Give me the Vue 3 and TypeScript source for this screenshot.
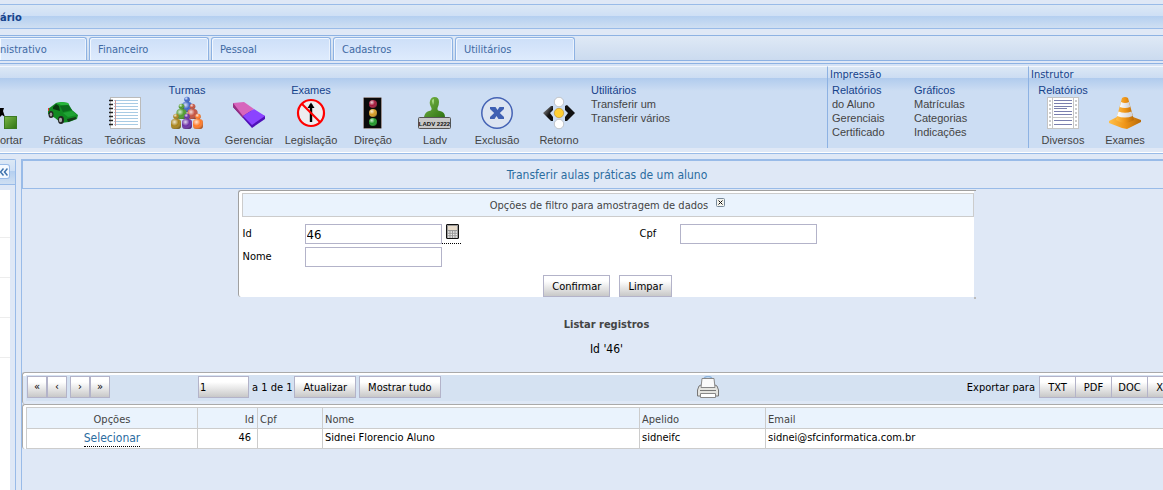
<script setup lang="ts">
import { ref } from 'vue'

interface Tool {
  icon: string
  label: string
  title?: string
}

const tabs = ['nistrativo', 'Financeiro', 'Pessoal', 'Cadastros', 'Utilitários']

const tools: Tool[] = [
  { icon: 'export', label: 'ortar' },
  { icon: 'car', label: 'Práticas' },
  { icon: 'notebook', label: 'Teóricas' },
  { icon: 'people', label: 'Nova', title: 'Turmas' },
  { icon: 'eraser', label: 'Gerenciar' },
  { icon: 'noentry', label: 'Legislação', title: 'Exames' },
  { icon: 'traffic', label: 'Direção' },
  { icon: 'stamp', label: 'Ladv' },
  { icon: 'exclude', label: 'Exclusão' },
  { icon: 'return', label: 'Retorno' },
]

const instructorTools: Tool[] = [
  { icon: 'film', label: 'Diversos', title: 'Relatórios' },
  { icon: 'cone', label: 'Exames' },
]

const printLists = [
  { title: 'Relatórios', items: ['do Aluno', 'Gerenciais', 'Certificado'] },
  { title: 'Gráficos', items: ['Matrículas', 'Categorias', 'Indicações'] },
]

const people = [
  { x: 16, y: 9, c: '#3f66c8' },
  { x: 10.5, y: 16, c: '#4f9a2e' },
  { x: 21.5, y: 16, c: '#c4513f' },
  { x: 5, y: 26, c: '#a8841c' },
  { x: 16, y: 26, c: '#6a2fa5' },
  { x: 27, y: 26, c: '#ff7a28' },
]

const id = ref('46')
const nome = ref('')
const cpf = ref('')
const page = ref('1')
const formats = ['TXT', 'PDF', 'DOC', 'XLS']
const rows = [
  { id: 46, cpf: '', nome: 'Sidnei Florencio Aluno', apelido: 'sidneifc', email: 'sidnei@sfcinformatica.com.br' },
]
</script>

<template>
  <div class="app">
    <svg class="defs" width="0" height="0" aria-hidden="true">
      <defs>
        <radialGradient id="ball" cx="0.35" cy="0.3" r="0.8">
          <stop offset="0" stop-color="#fff" stop-opacity="0.8" />
          <stop offset="0.5" stop-color="#fff" stop-opacity="0" />
          <stop offset="1" stop-color="#000" stop-opacity="0.4" />
        </radialGradient>
        <linearGradient id="green" x1="0" y1="0" x2="1" y2="1">
          <stop offset="0" stop-color="#7ab648" />
          <stop offset="1" stop-color="#2f7413" />
        </linearGradient>
        <linearGradient id="dark" x1="0" y1="0" x2="1" y2="1">
          <stop offset="0" stop-color="#aaa" />
          <stop offset="0.6" stop-color="#111" />
        </linearGradient>
        <linearGradient id="orange" x1="0" y1="0" x2="1" y2="0">
          <stop offset="0" stop-color="#ffc04a" />
          <stop offset="0.5" stop-color="#ef9517" />
          <stop offset="1" stop-color="#b86a08" />
        </linearGradient>
        <linearGradient id="band" x1="0" y1="0" x2="1" y2="0">
          <stop offset="0" stop-color="#fff" />
          <stop offset="1" stop-color="#cfcfd4" />
        </linearGradient>
      </defs>
    </svg>

    <header class="caption">ário</header>

    <nav class="tabs">
      <button v-for="t in tabs" :key="t" class="tab">{{ t }}</button>
    </nav>

    <div class="ribbon">
      <template v-for="(group, g) in [tools, null, instructorTools]" :key="g">
        <section class="group" :class="'group-' + g">
          <h2 class="group-head">{{ ['', 'Impressão', 'Instrutor'][g] }}</h2>
          <div class="group-body">
            <template v-if="group">
              <a v-for="t in group" :key="t.label" href="#" class="tool" :class="'tool-' + t.icon">
                <span class="tool-title">{{ t.title }}</span>
                <svg class="icon" viewBox="0 0 32 32" aria-hidden="true">
                  <g v-if="t.icon === 'export'">
                    <path d="M0 11 L4 11 L3 14 L5 20 L2 18 L0 20z" fill="#000" />
                    <rect x="4.5" y="19.5" width="12" height="12" fill="url(#green)" stroke="#3c7a22" />
                  </g>
                  <g v-else-if="t.icon === 'car'">
                    <path d="M1 12 L5 9 L9 6 L15 5 L21 6 L25 13 L31 18 L30 22 L22 25 L14 26 L8 21 L1 17z" fill="#118a22" />
                    <path d="M9 6 L15 5 L21 6 L22 8 L14 8z" fill="#27b53a" />
                    <path d="M13 9 L21 8 L25 13 L16 15z" fill="#0b6a1c" />
                    <path d="M6 10 L9 7 L12 9 L13 14 L6 12z" fill="#07380f" />
                    <path d="M16 16 L25 14 L30 18 L21 20z" fill="#1fa333" />
                    <ellipse cx="4" cy="17.5" rx="2.5" ry="3.500" fill="#222" />
                    <ellipse cx="4" cy="17.5" rx="1.300" ry="2" fill="#999" />
                    <ellipse cx="14" cy="23" rx="3" ry="4" fill="#222" />
                    <ellipse cx="13.5" cy="23" rx="1.600" ry="2.300" fill="#aaa" />
                    <path d="M20 22 L29 20 L29 22 L21 25z" fill="#143a18" />
                    <path d="M1 11 L2 11 L2 14 L1 14z" fill="#e33" />
                  </g>
                  <g v-else-if="t.icon === 'notebook'">
                    <rect x="1.5" y="0.5" width="30" height="31" fill="#fff" stroke="#bbb" />
                    <path d="M5 3.500H29M5 6.500H29M5 9.500H29M5 12.500H29M5 15.500H29M5 18.500H29M5 21.500H29M5 24.500H29M5 27.500H29" stroke="#a8cbe4" />
                    <path d="M6.500 3V29" stroke="#c99" />
                    <path d="M0 3.500H4M0 7.500H4M0 11.500H4M0 15.500H4M0 19.500H4M0 23.500H4M0 27.500H4" stroke="#222" stroke-width="1.300" />
                  </g>
                  <g v-else-if="t.icon === 'people'">
                    <template v-for="(p, i) in people" :key="i">
                      <rect :x="p.x - 5" :y="p.y - 4" width="10" height="10" rx="3.500" :fill="p.c" />
                      <rect :x="p.x - 5" :y="p.y - 4" width="10" height="10" rx="3.500" fill="url(#ball)" />
                      <circle :cx="p.x" :cy="p.y - 6.5" r="2.800" :fill="p.c" />
                      <circle :cx="p.x" :cy="p.y - 6.5" r="2.800" fill="url(#ball)" />
                    </template>
                  </g>
                  <g v-else-if="t.icon === 'eraser'">
                    <path d="M0 6 L0 10 L10 21 L19 31 L32 22 L32 19z" fill="#5011b8" />
                    <path d="M0 6 L0 10 L10 21 L11 15z" fill="#97307f" />
                    <path d="M0 6 L11 5 L21 12 L10 19z" fill="#d765bd" />
                    <path d="M21 12 L32 19 L19 28 L10 19z" fill="#8b43ff" />
                  </g>
                  <g v-else-if="t.icon === 'noentry'">
                    <circle cx="16" cy="16" r="13" fill="#ededf0" stroke="#f00" stroke-width="2.200" />
                    <path d="M16 25V7" stroke="#000" stroke-width="2.400" />
                    <path d="M12.500 11 L16 5.500 L19.500 11z" fill="#000" />
                    <path d="M7 7 L25 25" stroke="#f00" stroke-width="2.200" />
                  </g>
                  <g v-else-if="t.icon === 'traffic'">
                    <rect x="6.5" y="0.5" width="18" height="31" rx="1" fill="#0b0b0b" stroke="#998f8f" />
                    <circle cx="16" cy="7" r="4" fill="#a3163a" /><circle cx="16" cy="16" r="4" fill="#d59a22" /><circle cx="16" cy="25" r="4" fill="#1f9a28" />
                    <circle cx="16" cy="7" r="4" fill="url(#ball)" /><circle cx="16" cy="16" r="4" fill="url(#ball)" /><circle cx="16" cy="25" r="4" fill="url(#ball)" />
                  </g>
                  <g v-else-if="t.icon === 'stamp'">
                    <path d="M11 4 Q12 0 15.500 0 Q20 0 20 5 Q20 8 18.500 11 Q18 14 21 14 Q26 15 26 20 H5 Q6 15 10 14 Q13 14 12.500 11 Q10 7 11 4z" fill="url(#green)" />
                    <path d="M13 4 Q13 2 15 2 Q15 6 14 8z" fill="#a9dd88" />
                    <rect x="-0.5" y="20.5" width="32" height="11" rx="1" fill="#c8c8c8" stroke="#555" />
                    <text x="15.5" y="29" text-anchor="middle" class="plate">LADV 2222</text>
                  </g>
                  <g v-else-if="t.icon === 'exclude'">
                    <circle cx="16" cy="16" r="15.200" fill="#dce4f1" stroke="#4462b4" stroke-width="1.500" />
                    <path d="M9 10 H14.500 L16.500 13 L18.500 10 H23 V12 L18.800 16 L23 20 V22 H17.500 L15.500 19 L13.500 22 H9 V20 L13.200 16 L9 12z" fill="#3f60b3" />
                  </g>
                  <g v-else-if="t.icon === 'return'">
                    <path d="M0 16 L8 9 L10 9 L10 13 L7 16 L10 20 L10 24 L8 24z" fill="url(#dark)" />
                    <path d="M32 16 L24 8 L22 9 L22 13 L25 16 L22 20 L22 24 L24 24z" fill="#111" />
                    <circle cx="16" cy="5" r="4.700" fill="#fff" stroke="#aaa" stroke-width="0.600" />
                    <circle cx="16" cy="16" r="4.700" fill="#ffcf33" stroke="#b88a20" stroke-width="0.600" />
                    <circle cx="16" cy="27" r="4.700" fill="#fff" stroke="#aaa" stroke-width="0.600" />
                  </g>
                  <g v-else-if="t.icon === 'film'">
                    <rect x="0.5" y="0.5" width="31" height="31" fill="#fff" stroke="#c4c4c4" />
                    <path d="M5.500 0V32M26.500 0V32M5 20.500H27" stroke="#c4c4c4" />
                    <path d="M3 3V31M29 3V31" stroke="#ccc" stroke-width="2" stroke-dasharray="2 2" />
                    <path d="M7 3.500H25M7 6.500H25M7 9.500H25M7 11.500H20M7 14.500H25M7 17.500H25M7 23.500H25M7 27.500H25" stroke="#7a7fae" />
                  </g>
                  <g v-else-if="t.icon === 'cone'">
                    <path d="M0 24 L8 20 H24 L32 23 V25 L18 32 L13 31 L0 26z" fill="url(#orange)" />
                    <path d="M13 1 Q16 -1 19 1 L25 23 Q16 29 7 23z" fill="url(#orange)" />
                    <path d="M12 5 Q16 7 20 5 L21.300 10 Q16 12 10.800 10z" fill="url(#band)" />
                    <path d="M9.500 14.500 Q16 17 22.500 14.500 L23.800 19 Q16 22 8 19z" fill="url(#band)" />
                  </g>
                </svg>
                <span class="tool-label">{{ t.label }}</span>
              </a>
              <ul v-if="g === 0" class="links">
                <li class="links-title">Utilitários</li>
                <li><a href="#">Transferir um</a></li>
                <li><a href="#">Transferir vários</a></li>
              </ul>
            </template>
            <template v-else>
              <ul v-for="l in printLists" :key="l.title" class="links">
                <li class="links-title">{{ l.title }}</li>
                <li v-for="i in l.items" :key="i"><a href="#">{{ i }}</a></li>
              </ul>
            </template>
          </div>
        </section>
      </template>
    </div>

    <div class="work">
      <aside class="side">
        <div class="side-head">
          <button class="collapse" aria-label="Recolher">
            <svg width="8" height="8" viewBox="0 0 8 8"><path d="M3.500 0.500 L0.500 4 L3.500 7.500 M7.500 0.500 L4.500 4 L7.500 7.500" fill="none" stroke="#3f73ad" stroke-width="1.500" /></svg>
          </button>
        </div>
        <div class="side-body"><i v-for="n in 4" :key="n" class="side-row"></i></div>
      </aside>

      <main class="main">
        <h1 class="title">Transferir aulas práticas de um aluno</h1>

        <form class="filter" @submit.prevent>
          <div class="filter-head">
            Opções de filtro para amostragem de dados
            <button type="button" class="close" aria-label="Fechar">
              <svg width="9" height="9" viewBox="0 0 9 9"><rect x="0.5" y="0.5" width="8" height="8" rx="1" fill="#f4f4ee" stroke="#789" /><path d="M2.500 2.500 L6.500 6.500 M6.500 2.500 L2.500 6.500" stroke="#111" stroke-width="1" /></svg>
            </button>
          </div>
          <div class="fields">
            <label for="f-id">Id</label>
            <div class="cell">
              <input id="f-id" v-model="id" class="box" type="text" />
              <a href="#" class="calc" aria-label="Calculadora">
                <svg width="13" height="15" viewBox="0 0 13 15"><rect x="0.5" y="0.5" width="12" height="14" rx="0.500" fill="#999" stroke="#111" /><rect x="2" y="2" width="9" height="4" fill="#e8dccb" /><path d="M2 8H11M2 10.500H11M2 13H11" stroke="#eee" stroke-width="1.500" stroke-dasharray="1.500 1" /></svg>
              </a>
            </div>
            <label for="f-cpf">Cpf</label>
            <div class="cell"><input id="f-cpf" v-model="cpf" class="box" type="text" /></div>
            <label for="f-nome">Nome</label>
            <div class="cell"><input id="f-nome" v-model="nome" class="box" type="text" /></div>
          </div>
          <div class="actions">
            <button type="submit" class="btn">Confirmar</button>
            <button type="reset" class="btn">Limpar</button>
          </div>
        </form>

        <h2 class="list-title">Listar registros</h2>
        <p class="criteria">Id '46'</p>

        <div class="pager">
          <div class="bar">
            <div class="bar-part">
              <button class="btn nav">«</button><button class="btn nav">‹</button>
              <button class="btn nav nav-next">›</button><button class="btn nav">»</button>
              <input v-model="page" class="box page" type="text" aria-label="Página" />
              <span class="total">a 1 de 1</span>
              <button class="btn">Atualizar</button>
              <button class="btn all">Mostrar tudo</button>
            </div>
            <button class="print" aria-label="Imprimir">
              <svg width="22" height="22" viewBox="0 0 22 22">
                <path d="M7 2 Q11 -1 15 2" fill="none" stroke="#8fb4dc" stroke-width="1.500" />
                <path d="M2 10 L4 9 H18 L20 10 L21.500 14 V20 H0.500 V14z" fill="#e4e4e0" stroke="#777" />
                <path d="M5 2.500 H17 L18 11.500 H4z" fill="#fafafa" stroke="#888" />
                <path d="M3 14.500H19" stroke="#777" />
                <path d="M3.500 17.500H18.500V21.500H3.500z" fill="#fff" stroke="#888" />
              </svg>
            </button>
            <div class="bar-part">
              <span class="export">Exportar para</span>
              <button v-for="f in formats" :key="f" class="btn format">{{ f }}</button>
            </div>
          </div>
        </div>

        <div class="grid-wrap">
          <table class="grid">
            <colgroup><col class="c-op" /><col class="c-id" /><col class="c-cpf" /><col class="c-nome" /><col class="c-ap" /><col /></colgroup>
            <thead>
              <tr><th class="mid">Opções</th><th class="num">Id</th><th>Cpf</th><th>Nome</th><th>Apelido</th><th>Email</th></tr>
            </thead>
            <tbody>
              <tr v-for="r in rows" :key="r.id">
                <td class="mid"><a href="#" class="select">Selecionar</a></td>
                <td class="num id">{{ r.id }}</td>
                <td>{{ r.cpf }}</td>
                <td>{{ r.nome }}</td>
                <td>{{ r.apelido }}</td>
                <td>{{ r.email }}</td>
              </tr>
            </tbody>
          </table>
        </div>
      </main>
    </div>
  </div>
</template>

<style>
body {
  margin: 0;
  background: #dfe8f6;
}
</style>

<style scoped>
.app {
  display: flex;
  flex-direction: column;
  min-height: 100vh;
  overflow: hidden;
  background: #dfe8f6;
  color: #000;
  font: 11px/14px 'DejaVu Sans Condensed', 'DejaVu Sans', sans-serif;
}
.app * {
  box-sizing: border-box;
}
button,
input {
  margin: 0;
  font: inherit;
  color: inherit;
}
h1, h2, p, ul {
  margin: 0;
  padding: 0;
  font: inherit;
  list-style: none;
}
a {
  color: inherit;
  text-decoration: none;
}
svg {
  display: block;
}
.defs {
  position: absolute;
}

.caption {
  height: 25px;
  margin-top: 4px;
  border: solid #99bbe8;
  border-width: 1px 0;
  background: linear-gradient(#dce8f5, #cedff5 11px, #b4cff0 11px, #cfdff2);
  color: #15428b;
  font-weight: bold;
  line-height: 25px;
}

.tabs {
  display: flex;
  gap: 2px;
  height: 29px;
  margin-top: 6px;
  padding-top: 1px;
  border: solid #8db2e3;
  border-width: 1px 0;
  background: linear-gradient(#dfe9f6, #cbdbef 24px, #8db2e3 24px, #8db2e3 25px, #dfe8f6 25px);
}
.tab {
  width: 120px;
  height: 23px;
  padding: 1px 8px 0;
  border: 1px solid #8db2e3;
  border-bottom: 0;
  border-radius: 3px 3px 0 0;
  background: linear-gradient(#cddff8, #deebfd);
  box-shadow: inset 1px 1px #f2f7fe, inset -1px 0 #eaf2fd;
  color: #416aa3;
  text-align: left;
}
.tab:first-child {
  width: 87px;
  padding-left: 0;
  border-left: 0;
  border-top-left-radius: 0;
}

.ribbon {
  display: flex;
  height: 90px;
  padding-top: 2px;
  border-bottom: 1px solid #99bbe8;
  background: linear-gradient(#d6e3f5 2px, #dfe8f6 2px, #dfe8f6 88px, #fff 88px);
}
.group {
  height: 82px;
  border-top: 1px solid #f3f7fd;
  background: linear-gradient(#dce8f5, #cbdcf2 11px, #b0cbed 11px, #ccddf3 24px);
}
.group-0 {
  flex: 1;
}
.group-1 {
  width: 201px;
  border-left: 1px solid #8db2e3;
}
.group-2 {
  width: 135px;
  border-left: 1px solid #8db2e3;
}
.group-head {
  height: 16px;
  padding-left: 2px;
  color: #15428b;
  line-height: 16px;
}
.group-body {
  display: flex;
}
.group-1 .group-body {
  padding-left: 4px;
}
.group-2 .group-body {
  padding-left: 3px;
}
.tool {
  flex: none;
  display: flex;
  flex-direction: column;
  align-items: center;
  width: 62px;
  font-family: 'Liberation Sans', Arial, sans-serif;
}
.tool-export {
  width: 32px;
  align-items: flex-start;
}
.tool-title {
  height: 14px;
  color: #15428b;
}
.icon {
  width: 32px;
  height: 32px;
  overflow: visible;
}
.tool-label {
  margin-top: 4px;
  color: #444;
}
.plate {
  font: bold 6px 'Liberation Sans', Arial, sans-serif;
  fill: #111;
}
.links {
  width: 82px;
  color: #444;
  font-family: 'Liberation Sans', Arial, sans-serif;
}
.group-0 .links {
  width: auto;
  padding-left: 1px;
}
.links-title {
  color: #15428b;
}

.work {
  display: flex;
  flex: 1;
  gap: 5px;
  margin-top: 5px;
}
.side {
  display: flex;
  flex-direction: column;
  width: 16px;
  border: solid #99bbe8;
  border-width: 1px 1px 0 0;
  border-top-right-radius: 2px;
}
.side-head {
  height: 25px;
  padding-top: 4px;
  border-bottom: 1px solid #99bbe8;
  background: linear-gradient(#dce8f5, #cedff5 11px, #b4cff0 11px, #cfdff2);
}
.collapse {
  display: block;
  width: 10px;
  height: 15px;
  padding: 0;
  border: 1px solid #99bbe8;
  border-left: 0;
  border-radius: 0 3px 3px 0;
  background: #f4f9ff;
}
.side-body {
  flex: 1;
  width: 10px;
  margin-top: 5px;
  background: #fff;
}
.side-row {
  display: block;
  height: 40px;
  border-bottom: 1px solid #ededed;
}
.side-row:first-child {
  height: 48px;
}

/* The work area is wider than the window and runs past its right edge. */
.main {
  flex: 1;
  margin-right: -28px;
  border-left: 1px solid #99bbe8;
}
.title {
  height: 30px;
  border: solid #99bbe8;
  border-width: 2px 0 1px 1px;
  color: #2b6c9f;
  font-size: 12px;
  line-height: 29px;
  text-align: center;
}

.filter {
  position: relative;
  width: 738px;
  margin: 1px auto 0;
  padding: 2px 2px 0 3px;
  border: solid #a0a0a0;
  border-width: 1px 0 0 1px;
  border-radius: 3px 0 0 3px;
  background: linear-gradient(to left, #dfe8f6 2px, #fff 2px);
}
.filter::after {
  content: '';
  position: absolute;
  right: 0;
  bottom: -2px;
  width: 2px;
  height: 2px;
  background: #bbb;
}
.filter-head {
  display: flex;
  justify-content: center;
  gap: 8px;
  height: 24px;
  border: 1px solid #ccc;
  background: #eaf3fd;
  color: #444;
  line-height: 24px;
}
.close {
  height: 9px;
  margin-top: 4px;
  padding: 0;
  border: 0;
  background: none;
}
.fields {
  display: grid;
  grid-template-columns: 62px 335px 40px 1fr;
  gap: 3px 0;
  align-items: start;
  padding: 7px 0 0 1px;
}
.fields label {
  line-height: 20px;
}
.cell {
  display: flex;
}
.box {
  width: 137px;
  height: 20px;
  padding: 1px 1px 0;
  border: 1px solid #b3b3c9;
  background: #fff;
  font-size: 13px;
}
.calc {
  width: 19px;
  height: 20px;
  padding-left: 4px;
  border-bottom: 1px dotted #000;
}
.actions {
  display: flex;
  justify-content: center;
  gap: 9px;
  margin-top: 8px;
}
.btn {
  height: 22px;
  padding: 1px 8px 0;
  border: 1px solid #b3b3c9;
  background: linear-gradient(#fff 25%, #c8c8c8);
  line-height: 20px;
  white-space: nowrap;
}

.list-title {
  margin-top: 21px;
  color: #444;
  font-weight: bold;
  text-align: center;
}
.criteria {
  margin-top: 8px;
  font-size: 12px;
  line-height: 18px;
  text-align: center;
}

.pager {
  margin-top: 14px;
  height: 32px;
  padding: 2px 0 0 3px;
  border: solid #aaa;
  border-width: 1px 0 0 1px;
  border-radius: 3px 0 0 3px;
  background: linear-gradient(#fff 3px, #dfe8f6 3px);
}
.bar {
  display: flex;
  justify-content: space-between;
  height: 26px;
  padding: 1px 7px 0 1px;
  background: #d5e2f2;
}
.bar-part {
  display: flex;
}
.nav {
  width: 20px;
  padding: 0;
}
.nav-next {
  margin-left: 3px;
}
.page {
  width: 51px;
  margin-left: 88px;
  height: 22px;
  background: linear-gradient(#fff 25%, #c8c8c8);
  font-size: 11px;
}
.total {
  margin: 0 2px 0 3px;
  line-height: 24px;
}
.all {
  margin-left: 3px;
}
.print {
  height: 22px;
  margin-left: 8px;
  padding: 0;
  border: 0;
  background: none;
}
.export {
  margin-right: 4px;
  line-height: 24px;
}
.format {
  width: 37px;
  padding: 1px 0 0;
}
.format + .format {
  margin-left: -1px;
}

.grid-wrap {
  padding: 2px 0 0 3px;
  border: solid #aaa;
  border-width: 1px 0 0 1px;
  border-radius: 3px 0 0 3px;
  background: #fff;
}
.grid {
  width: 100%;
  table-layout: fixed;
  border-collapse: collapse;
}
.c-op { width: 171px; }
.c-id { width: 60px; }
.c-cpf { width: 65px; }
.c-nome { width: 317px; }
.c-ap { width: 126px; }
.grid th,
.grid td {
  padding: 0 2px;
  border: 1px solid #ccc;
  text-align: left;
}
.grid th {
  height: 21px;
  padding-top: 3px;
  background: #eaf3fd;
  color: #444;
  font-weight: normal;
}
.grid td {
  height: 20px;
  vertical-align: top;
  line-height: 17px;
}
.grid .mid {
  text-align: center;
}
.grid .num {
  padding-right: 3px;
  text-align: right;
}
.grid .id {
  padding-right: 6px;
}
.select {
  display: inline-block;
  margin-top: 2px;
  border-bottom: 1px dotted #000;
  color: #2b6c9f;
  font-size: 12px;
  line-height: 15px;
}
</style>
